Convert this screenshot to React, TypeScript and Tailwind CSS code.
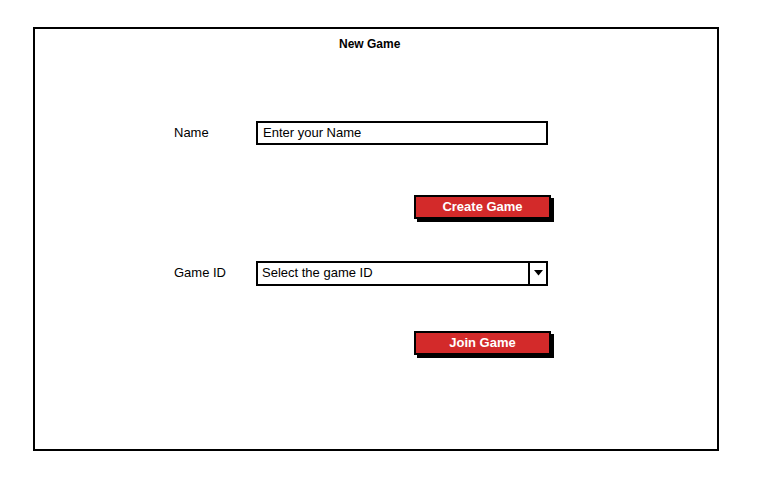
import React from "react";

const font = { fontFamily: '"Liberation Sans", Arial, sans-serif' };

function RedButton({ label }: { label: string }) {
  return (
    <div className="ml-[379px] mt-0 flex h-[24px] w-[137px] items-center justify-center border-2 border-black bg-[#d32a2a] text-[13px] font-bold text-white shadow-[3px_3px_0_#000]">
      {label}
    </div>
  );
}

export default function App() {
  return (
    <div className="h-[497px] w-[771px] bg-white pl-[33px] pt-[27px] text-black" style={font}>
      <div className="flex h-[424px] w-[686px] flex-col border-2 border-black">
        <div className="pt-[7px] pl-[304px] text-[12px] font-bold leading-[16px]">New Game</div>

        <div className="mt-[69px] flex h-[24px] items-center pl-[139px]">
          <div className="w-[82px] text-[13px]">Name</div>
          <div className="flex h-[24px] w-[292px] items-center border-2 border-black px-[5px] text-[13px]">
            Enter your Name
          </div>
        </div>

        <div className="mt-[50px]">
          <RedButton label="Create Game" />
        </div>

        <div className="mt-[42px] flex h-[24px] items-center pl-[139px]">
          <div className="w-[82px] text-[13px]">Game ID</div>
          <div className="flex h-[25px] w-[292px] items-stretch border-2 border-black text-[13px]">
            <div className="flex flex-1 items-center px-[4px]">Select the game ID</div>
            <div className="flex w-[18px] items-center justify-center border-l-2 border-black">
              <svg width="9" height="6" viewBox="0 0 9 6">
                <path d="M0 0 L9 0 L4.5 5.5 Z" fill="#000" />
              </svg>
            </div>
          </div>
        </div>

        <div className="mt-[46px]">
          <RedButton label="Join Game" />
        </div>
      </div>
    </div>
  );
}
